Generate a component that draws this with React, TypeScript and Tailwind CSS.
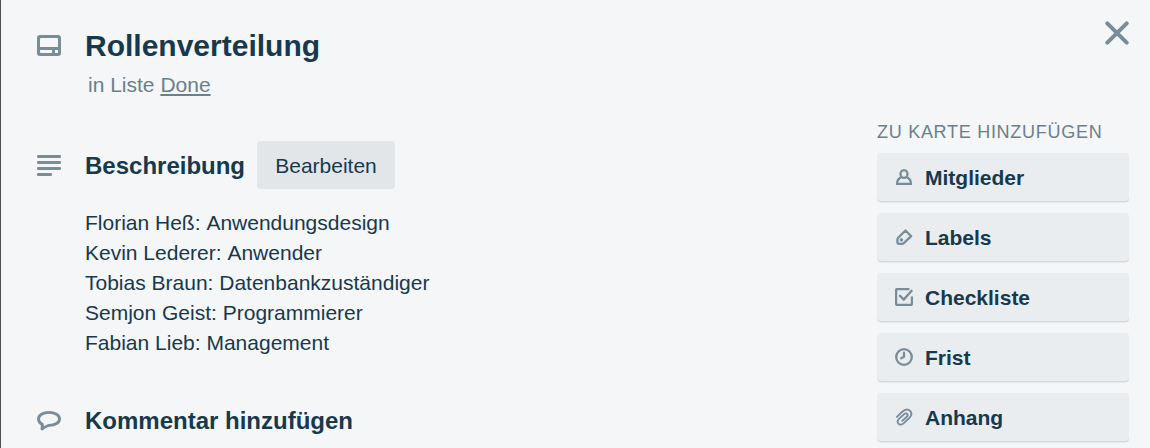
import type { ReactNode } from "react";

const description = [
  { name: "Florian Heß:", role: "Anwendungsdesign" },
  { name: "Kevin Lederer:", role: "Anwender" },
  { name: "Tobias Braun:", role: "Datenbankzuständiger" },
  { name: "Semjon Geist:", role: "Programmierer" },
  { name: "Fabian Lieb:", role: "Management" },
];

const actions: { label: string; icon: ReactNode }[] = [
  {
    label: "Mitglieder",
    icon: (
      <>
        <ellipse cx="9" cy="6" rx="3.5" ry="3.9" />
        <path d="M6 9.4C3.4 10.4 2.1 12 2.1 15.8H15.9C15.9 12 14.6 10.4 12 9.4" />
      </>
    ),
  },
  {
    label: "Labels",
    icon: (
      <>
        <path d="M10.5 2.5 16.2 8.2 8.8 15.1Q8 15.9 6.9 15.9H4.2Q2.4 15.9 2.4 14.1V11.7Q2.4 10.7 3.2 9.8Z" strokeLinejoin="round" />
        <circle cx="6.4" cy="11.9" r="1.3" fill="currentColor" strokeWidth="1" />
      </>
    ),
  },
  {
    label: "Checkliste",
    icon: (
      <>
        <path d="M14.4 1.1H2Q1.1 1.1 1.1 2V16Q1.1 16.9 2 16.9H16Q16.9 16.9 16.9 16V8.5" />
        <path d="M5 7.8 8.8 11.6 16.6 2.8" strokeWidth="2.4" strokeLinecap="round" />
      </>
    ),
  },
  {
    label: "Frist",
    icon: (
      <>
        <circle cx="9" cy="9" r="7.8" />
        <path d="M9 4.7V8.8L6.2 10.2" strokeLinecap="round" strokeLinejoin="round" />
      </>
    ),
  },
  {
    label: "Anhang",
    icon: (
      <path
        transform="translate(0 0.7)"
        d="M1.9 8.2 7 3.3C10.2.3 13.2.3 15.1 2.3 17 4.3 16.7 7 14.2 9.4L8.5 14.7C6.8 16.2 4.6 16.3 3.4 14.9 2.2 13.5 2.5 11.6 4 10.2L9.2 5.4C10.2 4.5 11.5 4.5 12.2 5.3 12.9 6.1 12.7 7.2 11.8 8L7.2 12.2"
        strokeWidth="1.9"
        strokeLinecap="round"
      />
    ),
  },
];

export default function App() {
  return (
    <main className="flex h-[448px] w-full overflow-hidden border-l border-[#505050] bg-[#f4f6f8] font-['Liberation_Sans',Arial,sans-serif] text-[21px] leading-[30px] text-[#17394d]">
      <section className="flex w-[876px] shrink-0 flex-col pt-7 pl-9">
        <header>
          <div className="flex h-9 items-center">
            <svg className="mb-px shrink-0 text-[#798d99]" width="24" height="21" viewBox="0 0 24 21" fill="currentColor">
              <path
                fillRule="evenodd"
                d="M3 0H21Q24 0 24 3V18Q24 21 21 21H3Q0 21 0 18V3Q0 0 3 0ZM4 3Q3 3 3 4V12H21V4Q21 3 20 3ZM3 15V17Q3 18 4 18H15V15ZM18 15V18H21V15Z"
              />
            </svg>
            <h1 className="ml-6 text-[30px] leading-9 font-bold">Rollenverteilung</h1>
          </div>
          <p className="mt-1.5 ml-[51px] text-[#6b808c]">
            in Liste <a className="underline decoration-2 underline-offset-2" href="#done">Done</a>
          </p>
        </header>

        <div className="mt-[41px] flex h-12 items-center">
          <svg className="mt-0.5 shrink-0 text-[#798d99]" width="24" height="22" viewBox="0 0 24 22" fill="currentColor">
            <rect width="24" height="3" rx="1.2" />
            <rect y="6" width="24" height="3" rx="1.2" />
            <rect y="12" width="24" height="3" rx="1.2" />
            <rect y="18" width="15" height="3" rx="1.2" />
          </svg>
          <h2 className="ml-6 w-[172px] pt-0.5 text-2xl leading-9 font-bold">Beschreibung</h2>
          <button className="h-12 w-[138px] rounded-[4px] bg-[#e2e6e9] pt-0.5">Bearbeiten</button>
        </div>

        <div className="mt-[19px] ml-12">
          {description.map(({ name, role }) => (
            <p key={name}>
              {name}
              <span className="[font-kerning:none]"> </span>
              {role}
            </p>
          ))}
        </div>

        <div className="mt-[45px] flex h-9 items-center">
          <svg className="shrink-0 text-[#798d99]" width="24" height="22" viewBox="0 0 24 22" fill="none" stroke="currentColor" strokeWidth="2.9" strokeLinejoin="round">
            <path d="M5 19 5.4 14.6C2.7 13.2 1.5 11.4 1.5 9.1 1.5 5.2 6 2.4 12 2.4S22.5 5.2 22.5 8.9 18 15.4 12 15.4C9.7 15.8 7.5 17.3 5 19Z" />
          </svg>
          <h2 className="ml-6 text-2xl leading-9 font-bold">Kommentar hinzufügen</h2>
        </div>
      </section>

      <aside className="w-[252px] shrink-0 pt-[117px]">
        <h3 className="mb-1.5 text-lg leading-[30px] tracking-[0.72px] whitespace-nowrap text-[#6b808c] uppercase">Zu Karte hinzufügen</h3>
        <div className="flex flex-col gap-3">
          {actions.map(({ label, icon }) => (
            <button key={label} className="flex h-12 w-full shrink-0 items-center rounded-[4px] bg-[#eaedf0] pl-[18px] text-left font-bold shadow-[0_1.5px_0_0_#d6dadc]">
              <svg className="shrink-0 text-[#798d99]" width="18" height="18" viewBox="0 0 18 18" fill="none" stroke="currentColor" strokeWidth="2.3">
                {icon}
              </svg>
              <span className="ml-3 pt-0.5">{label}</span>
            </button>
          ))}
        </div>
      </aside>

      <button aria-label="Schließen" className="absolute top-[21px] right-[21px] h-6 w-6 text-[#798d99]">
        <svg width="24" height="24" viewBox="0 0 24 24" fill="none" stroke="currentColor" strokeWidth="4" strokeLinecap="round">
          <path d="M2.3 2.3 21.7 21.7M21.7 2.3 2.3 21.7" />
        </svg>
      </button>
    </main>
  );
}
